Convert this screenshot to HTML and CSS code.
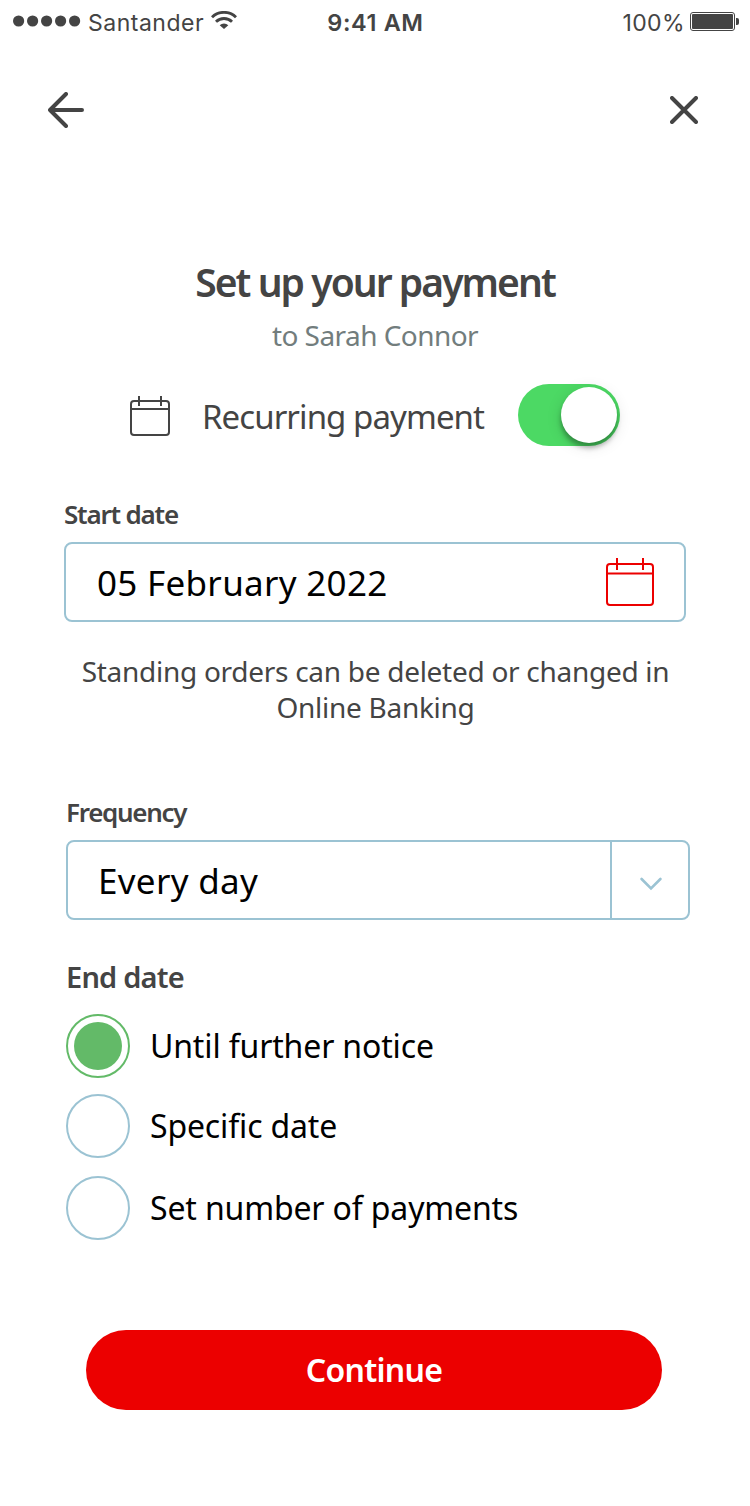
FILE: index.html
```html
<!DOCTYPE html>
<html lang="en">
<head>
    <meta charset="UTF-8">
    <meta name="viewport" content="width=device-width, initial-scale=1.0">
    <title>Set up your payment</title>
    <link rel="stylesheet" href="styles.css">
</head>
<body>
    <!-- Status bar -->
    <div class="status-bar">
        <div class="carrier">
            <svg class="signal" width="68" height="12" viewBox="0 0 68 12" fill="#444">
                <circle cx="5.6" cy="6" r="5.6"/>
                <circle cx="19.6" cy="6" r="5.6"/>
                <circle cx="33.6" cy="6" r="5.6"/>
                <circle cx="47.6" cy="6" r="5.6"/>
                <circle cx="61.6" cy="6" r="5.6"/>
            </svg>
            <span class="carrier-name">Santander</span>
            <svg class="wifi" width="26" height="18" viewBox="0 0 26 18" fill="none" stroke="#444" stroke-width="2.9">
                <path d="M1 6.2a17.3 17.3 0 0 1 24 0"/>
                <path d="M5 10.7a11.6 11.6 0 0 1 16 0"/>
                <path d="M8.7 14.2a6.2 6.2 0 0 1 8.6 0L13 18z" fill="#444" stroke="none"/>
            </svg>
        </div>
        <span class="time">9:41 AM</span>
        <div class="battery">
            <span class="battery-level">100%</span>
            <svg class="battery-icon" width="50" height="20" viewBox="0 0 50 20">
                <rect x=".5" y=".5" width="44" height="18" rx="2.5" fill="none" stroke="#444"/>
                <rect x="2" y="2" width="41" height="15" rx="1" fill="#444"/>
                <path d="M46 6h1a2 2 0 0 1 2 2v3a2 2 0 0 1-2 2h-1z" fill="#444"/>
            </svg>
        </div>
    </div>

    <!-- Navigation -->
    <div class="nav">
        <svg width="36" height="36" viewBox="0 0 36 36" fill="none" stroke="#444" stroke-width="4" stroke-linecap="round" stroke-linejoin="round">
            <path d="M34 18H2M18 2L2 18l16 16"/>
        </svg>
        <svg width="28" height="28" viewBox="0 0 28 28" fill="none" stroke="#444" stroke-width="4" stroke-linecap="round">
            <path d="M2 2l24 24M26 2L2 26"/>
        </svg>
    </div>

    <h1>Set up your payment</h1>
    <p class="payee">to Sarah Connor</p>

    <div class="recurring">
        <svg class="recurring-icon" width="40" height="40" viewBox="0 0 40 40" fill="none" stroke="#444" stroke-width="2">
            <rect x="1" y="5" width="38" height="34" rx="3"/>
            <path d="M1 13h38M9 0v10M31 0v10"/>
        </svg>
        <span class="recurring-label">Recurring payment</span>
        <div class="toggle"><div class="knob"></div></div>
    </div>

    <!-- Start date -->
    <div class="form start">
        <label class="label">Start date</label>
        <div class="field">
            <span class="date-value">05 February 2022</span>
            <svg class="calendar" width="48" height="48" viewBox="0 0 48 48" fill="none" stroke="#ec0000" stroke-width="2">
                <rect x="1" y="6" width="46" height="41" rx="3"/>
                <path d="M1 15.5h46M11 0v12M37 0v12"/>
            </svg>
        </div>
        <p class="note">Standing orders can be deleted or changed in<br>Online Banking</p>
    </div>

    <!-- Frequency and end date -->
    <div class="form frequency">
        <label class="label frequency-label">Frequency</label>
        <div class="field frequency-field">
            <span class="frequency-value">Every day</span>
            <div class="dropdown">
                <svg width="22" height="14" viewBox="0 0 22 14" fill="none" stroke="#9bc3d3" stroke-width="2.6" stroke-linecap="round">
                    <path d="M1.6 2L11 11.4 20.4 2"/>
                </svg>
            </div>
        </div>

        <div class="end-label">End date</div>
        <div class="option">
            <span class="radio checked"></span>
            <span class="option-text">Until further notice</span>
        </div>
        <div class="option">
            <span class="radio"></span>
            <span class="option-text">Specific date</span>
        </div>
        <div class="option last">
            <span class="radio"></span>
            <span class="option-text">Set number of payments</span>
        </div>
    </div>

    <button class="continue">Continue</button>
</body>
</html>
```
FILE: styles.css
```css
* {
    box-sizing: border-box;
}

body {
    margin: 0;
    width: 750px;
    height: 1506px;
    background-color: #fff;
    color: #444;
    font-family: "Noto Sans", sans-serif;
    display: flex;
    flex-direction: column;
}

svg {
    display: block;
    flex: none;
}

p, h1 {
    margin: 0;
}

span {
    white-space: nowrap;
}

.status-bar {
    height: 44px;
    padding: 2px 10px 0 13px;
    display: grid;
    grid-template-columns: 1fr auto 1fr;
    align-items: center;
    font-family: Inter, sans-serif;
    font-size: 23px;
}

.carrier, .battery {
    display: flex;
    align-items: center;
}

.carrier-name {
    margin-left: 7px;
    letter-spacing: 0.5px;
}

.signal {
    margin-bottom: 5px;
}

.wifi {
    margin: 0 0 7px 7px;
}

.time {
    margin: 0 2px 2px 0;
    font-weight: 600;
    font-size: 23.5px;
    letter-spacing: 0.6px;
}

.battery {
    justify-content: flex-end;
    gap: 5px;
}

.battery-level {
    letter-spacing: 0.4px;
}

.battery-icon {
    margin-bottom: 3px;
}

.nav {
    height: 132px;
    padding: 0 52px 0 48px;
    display: flex;
    justify-content: space-between;
    align-items: center;
}

h1 {
    margin-top: 82px;
    font-size: 39px;
    font-weight: 600;
    line-height: 48px;
    letter-spacing: -1.95px;
    text-align: center;
}

.payee {
    margin-top: 11px;
    font-size: 28px;
    line-height: 36px;
    letter-spacing: -0.55px;
    color: #727d7d;
    text-align: center;
}

.recurring {
    height: 62px;
    margin: 31px 130px 0;
    display: flex;
    align-items: center;
}

.recurring-icon {
    margin-top: 2px;
}

.recurring-label {
    width: 316px;
    margin: 2px 0 0 32px;
    font-size: 33px;
    letter-spacing: -0.93px;
}

.toggle {
    flex: none;
    width: 102px;
    height: 62px;
    padding: 3px;
    border-radius: 31px;
    background-color: #4cd964;
    display: flex;
    justify-content: flex-end;
}

.knob {
    width: 56px;
    height: 56px;
    border-radius: 50%;
    background-color: #fff;
    box-shadow: 0 5px 5px rgba(0, 0, 0, 0.3), 0 3px 16px rgba(0, 0, 0, 0.12);
}

.start {
    width: 622px;
    margin: 52px 0 0 64px;
}

.label {
    display: block;
    font-size: 26px;
    font-weight: 600;
    line-height: 32px;
    letter-spacing: -1.2px;
}

.frequency-label {
    letter-spacing: -1.3px;
}

.field {
    height: 80px;
    margin-top: 12px;
    padding-left: 31px;
    border: 2px solid #9bc3d3;
    border-radius: 8px;
    display: flex;
    justify-content: space-between;
    align-items: center;
    color: #000;
    font-size: 35px;
    letter-spacing: 0.3px;
}

.frequency-field {
    padding-left: 30px;
}

.calendar {
    margin-right: 30px;
}

.note {
    margin-top: 31px;
    padding-left: 1px;
    font-size: 28px;
    line-height: 36px;
    letter-spacing: -0.28px;
    text-align: center;
}

.frequency {
    width: 624px;
    margin: 71px 0 0 66px;
}

.dropdown {
    width: 78px;
    height: 76px;
    padding: 8px 0 0 1px;
    border-left: 2px solid #9bc3d3;
    display: flex;
    justify-content: center;
    align-items: center;
}

.end-label {
    margin: 37px 0 17px;
    font-size: 29px;
    font-weight: 600;
    line-height: 40px;
    letter-spacing: -0.8px;
}

.option {
    height: 64px;
    margin-bottom: 16px;
    display: flex;
    align-items: center;
    gap: 20px;
    color: #000;
    font-size: 32px;
    letter-spacing: -0.15px;
}

.option.last {
    margin: 18px 0 0;
}

.option-text {
    line-height: 64px;
}

.radio {
    width: 64px;
    height: 64px;
    padding: 6px;
    border: 2px solid #9bc3d3;
    border-radius: 50%;
}

.radio.checked {
    border-color: #63ba68;
    background: #63ba68 content-box;
}

.continue {
    width: 576px;
    height: 80px;
    margin: 90px 0 0 86px;
    padding: 0 0 2px;
    border: none;
    border-radius: 40px;
    background-color: #ec0000;
    color: #fff;
    font-family: inherit;
    font-size: 32px;
    font-weight: 600;
    letter-spacing: -0.7px;
}
```
